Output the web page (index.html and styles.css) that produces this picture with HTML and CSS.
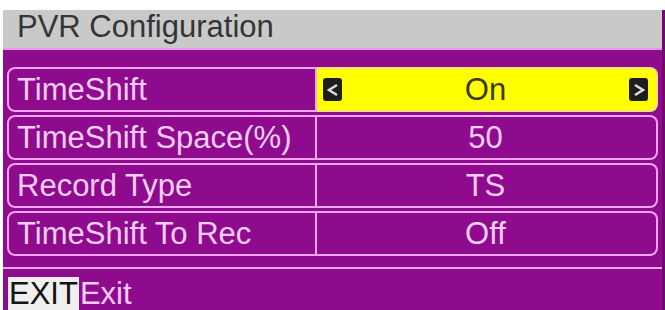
FILE: index.html
```html
<!DOCTYPE html>
<html lang="en">
<head>
<meta charset="UTF-8">
<title>PVR Configuration</title>
<link rel="stylesheet" href="styles.css">
</head>
<body>

<div class="panel">
    <div class="title">PVR Configuration</div>

    <div class="rows">
        <div class="row active">
            <div class="label">TimeShift</div>
            <div class="value">
                <span class="arrow">
                    <svg width="12" height="14" viewBox="0 0 12 14"><polyline points="10,2 2,7 10,12" fill="none" stroke="#ddd" stroke-width="2.4"/></svg>
                </span>
                <span class="val-text">On</span>
                <span class="arrow">
                    <svg width="12" height="14" viewBox="0 0 12 14"><polyline points="2,2 10,7 2,12" fill="none" stroke="#ddd" stroke-width="2.4"/></svg>
                </span>
            </div>
        </div>
        <div class="row">
            <div class="label">TimeShift Space(%)</div>
            <div class="value"><span class="val-text">50</span></div>
        </div>
        <div class="row">
            <div class="label">Record Type</div>
            <div class="value"><span class="val-text">TS</span></div>
        </div>
        <div class="row">
            <div class="label">TimeShift To Rec</div>
            <div class="value"><span class="val-text">Off</span></div>
        </div>
    </div>

    <div class="footer">
        <span class="key">EXIT</span><span class="key-label">Exit</span>
    </div>
</div>

</body>
</html>
```

FILE: styles.css
```css
/* ─── Page ───────────────────────────────────────────────────── */
*{box-sizing:border-box;margin:0}
body{
    background:#fff;
    font-family:"Liberation Sans",Arial,sans-serif;
    font-size:31px;
}

.panel{
    margin:10px 0 0 3px;
    width:662px;height:300px;
    background:#8d0b8c;
    border-right:3px solid #6e0a6d;
    display:flex;flex-direction:column;
    overflow:hidden;
}

/* ─── Header ─────────────────────────────────────────────────── */
.title{
    height:40px;
    background:#c9c9c9;
    border-bottom:2px solid #e59ae4;
    color:#353535;
    padding:0 0 4px 14px;
    line-height:34px;
}

/* ─── Rows ───────────────────────────────────────────────────── */
.rows{
    display:flex;flex-direction:column;gap:3px;
    padding:17px 4px 0 4px;
}
.row{
    display:grid;grid-template-columns:310px 1fr;
    height:45px;
}
.label{
    border:2px solid #f1a6ef;
    border-radius:8px 0 0 8px;
    color:#f7cdf6;
    padding-left:8px;
    line-height:41px;
    white-space:nowrap;
}
.value{
    border:2px solid #f1a6ef;border-left:none;
    border-radius:0 8px 8px 0;
    display:flex;align-items:center;
    padding:0 8px 0 6px;
    color:#f7cdf6;
}
.val-text{flex:1;text-align:center;line-height:41px}

.row.active .value{
    background:#ffff00;
    border-color:#f6e27a;
    color:#3c3a10;
}
.arrow{
    width:19px;height:23px;
    background:#1d1d1d;border-radius:3px;
    display:flex;align-items:center;justify-content:center;
}

/* ─── Footer ─────────────────────────────────────────────────── */
.footer{
    margin-top:11px;
    border-top:2px solid #f1a6ef;
    padding:8px 0 0 5px;
    display:flex;align-items:flex-start;
}
.key{
    background:#efefef;
    color:#141414;
    line-height:34px;
    padding:0 1px;
}
.key-label{
    color:#f7cdf6;
    line-height:34px;
    padding-left:1px;
}
```
